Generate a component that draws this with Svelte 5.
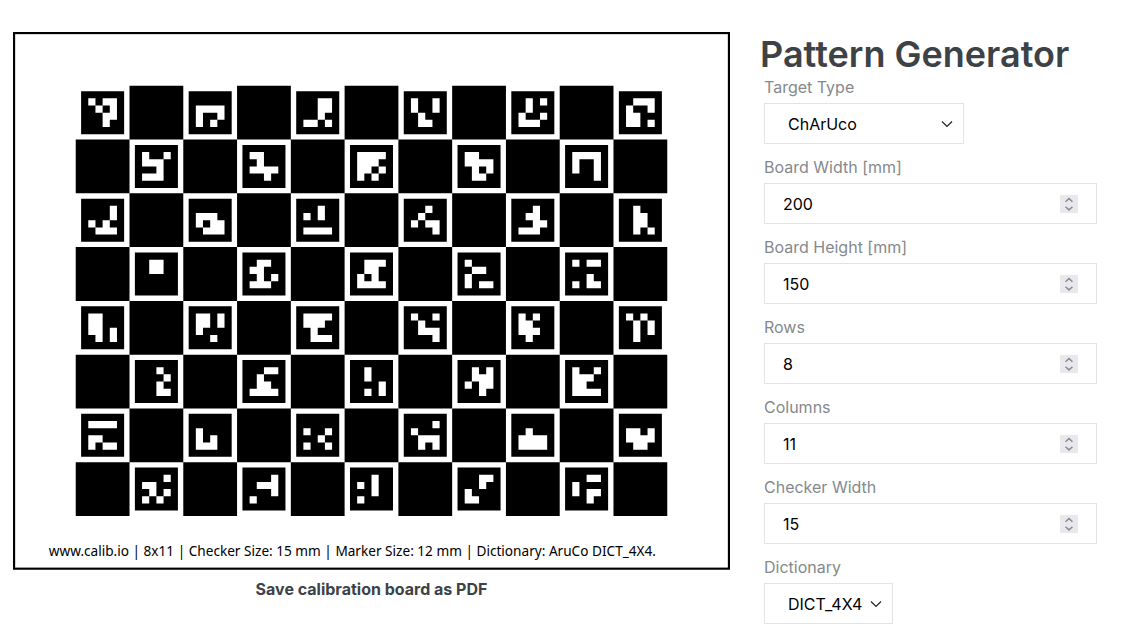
<script>
  let targetType = $state('ChArUco');
  let boardWidth = $state(200);
  let boardHeight = $state(150);
  let rows = $state(8);
  let columns = $state(11);
  let checker = $state(15);
  let dictionary = $state('DICT_4X4');

  // DICT_4X4 marker bits, two bytes per marker, most significant bit first
  const codes = [
    0xb532, 0x0f9a, 0x332d, 0x9946, 0x549e, 0x79cd,
    0x9e2e, 0xc4f2, 0xfeda, 0xcf56, 0xf991,
    0x11a7, 0x0eb7, 0x2a0f, 0x24b1, 0x263e, 0x4665,
    0x6600, 0x6c5e, 0x76af, 0x868b, 0xb02b,
    0xccd5, 0xdd82, 0xfe47, 0x9471, 0xace4, 0xa554,
    0x2123, 0x346f, 0x4415, 0x57b2, 0x9ecf,
    0xf0cb, 0x08ae, 0x0929, 0x1875, 0x04ff, 0x0df6,
    0x1c5a, 0x1718, 0x2a28, 0x328c, 0x38b2
  ];

  // Board geometry in tenths of a millimetre
  const board = $derived.by(() => {
    const size = checker * 10;
    const left = (boardWidth * 10 - columns * size) / 2;
    const top = (boardHeight * 10 - rows * size) / 2;
    let squares = '';
    let bits = '';
    let id = 0;
    const box = (x, y, s, w = s) => `M${x} ${y}h${w}v${s}h${-w}z`;
    for (let r = 0; r < rows; r++) {
      for (let c = 0; c < columns; c++) {
        const x = left + c * size;
        const y = top + r * size;
        if ((r + c) % 2) {
          squares += box(x, y, size);
          continue;
        }
        squares += box(x + size / 10, y + size / 10, (size * 4) / 5);
        const code = codes[id++ % codes.length];
        const bit = (size * 2) / 15;
        for (let j = 0; j < 4; j++) {
          for (let i = 0; i < 4; i++) {
            if (!((code >> (15 - j * 4 - i)) & 1)) continue;
            let run = 1;
            while (i + run < 4 && (code >> (15 - j * 4 - i - run)) & 1) run++;
            bits += box(x + size / 10 + bit * (i + 1), y + size / 10 + bit * (j + 1), bit, bit * run);
            i += run;
          }
        }
      }
    }
    return { squares, bits };
  });

  const caption = $derived(
    `www.calib.io | ${rows}x${columns} | Checker Size: ${checker} mm | Marker Size: ${(checker * 4) / 5} mm | Dictionary: AruCo ${dictionary}.`
  );
</script>

{#snippet chevron()}
  <svg class="chevron" viewBox="0 0 12 8" aria-hidden="true"><path d="M1 1.5 6 6.5 11 1.5" /></svg>
{/snippet}

{#snippet number(id, label, value, set)}
  <div class="field">
    <label for={id}>{label}</label>
    <div class="number">
      <input {id} type="number" min="1" {value} oninput={(e) => set(Math.max(1, +e.currentTarget.value))} />
      <span class="spinner">
        <button type="button" aria-label="Increase {label}" onclick={() => set(value + 1)}>
          <svg viewBox="0 0 18 9" aria-hidden="true"><path d="M5.5 6.8 9 3.6 12.5 6.8" /></svg>
        </button>
        <button type="button" aria-label="Decrease {label}" onclick={() => set(Math.max(1, value - 1))}>
          <svg viewBox="0 0 18 9" aria-hidden="true"><path d="M5.5 2.7 9 5.9 12.5 2.7" /></svg>
        </button>
      </span>
    </div>
  </div>
{/snippet}

<main>
  <section class="preview">
    <svg class="board" viewBox="0 0 {boardWidth * 10} {boardHeight * 10}" role="img" aria-label="Calibration board">
      <rect class="edge" x="3" y="3" width={boardWidth * 10 - 6} height={boardHeight * 10 - 6} />
      <path d={board.squares} />
      <path class="bits" d={board.bits} />
      <text x="100" y={boardHeight * 10 - 39}>{caption}</text>
    </svg>
    <a href="#save">Save calibration board as PDF</a>
  </section>

  <section class="settings">
    <h1>Pattern Generator</h1>
    <form>
      <div class="field">
        <label for="type">Target Type</label>
        <div class="select wide">
          <select id="type" bind:value={targetType}><option>ChArUco</option></select>
          {@render chevron()}
        </div>
      </div>
      {@render number('width', 'Board Width [mm]', boardWidth, (v) => (boardWidth = v))}
      {@render number('height', 'Board Height [mm]', boardHeight, (v) => (boardHeight = v))}
      {@render number('rows', 'Rows', rows, (v) => (rows = v))}
      {@render number('columns', 'Columns', columns, (v) => (columns = v))}
      {@render number('checker', 'Checker Width', checker, (v) => (checker = v))}
      <div class="field">
        <label for="dictionary">Dictionary</label>
        <div class="select">
          <select id="dictionary" bind:value={dictionary}><option>DICT_4X4</option></select>
          {@render chevron()}
        </div>
      </div>
    </form>
  </section>
</main>

<style>
  :global(body) {
    margin: 0;
    background: #fff;
  }
  main {
    display: grid;
    grid-template-columns: 717fr 337fr;
    column-gap: 30px;
    padding: 32px 39px 0 13px;
    font: 16px/20px Inter, 'Liberation Sans', sans-serif;
    color: #3d4246;
  }
  .preview {
    display: flex;
    flex-direction: column;
    align-items: center;
    gap: 9px;
  }
  .board {
    display: block;
    width: 100%;
  }
  .edge {
    fill: #fff;
    stroke: #000;
    stroke-width: 6;
  }
  .bits {
    fill: #fff;
  }
  .board text {
    font: 38px 'Noto Sans', sans-serif;
  }
  a {
    color: inherit;
    font-weight: 700;
    text-decoration: none;
  }
  h1 {
    margin: 0;
    font-size: 36px;
    line-height: 44px;
    font-weight: 600;
    white-space: nowrap;
  }
  form {
    display: grid;
    gap: 12px;
    padding-left: 4px;
  }
  .field {
    display: grid;
    gap: 5px;
    justify-items: start;
  }
  label {
    line-height: 22px;
    color: #85898d;
  }
  .number {
    display: flex;
    align-items: center;
    box-sizing: border-box;
    width: 100%;
    height: 41px;
    padding: 0 18px;
    border: 1px solid #e3e3e5;
  }
  input {
    flex: 1;
    min-width: 0;
    padding: 0;
    border: 0;
    outline: 0;
    background: none;
    font: inherit;
    color: #000;
    appearance: textfield;
  }
  input::-webkit-inner-spin-button {
    display: none;
  }
  .spinner {
    display: grid;
    width: 18px;
    height: 18px;
    background: #e9e9ed;
  }
  .spinner button {
    display: block;
    height: 9px;
    padding: 0;
    border: 0;
    background: none;
  }
  .spinner svg {
    display: block;
    width: 18px;
    height: 9px;
    fill: none;
    stroke: #8b8b93;
    stroke-width: 1.5;
  }
  .select {
    display: grid;
    align-items: center;
  }
  .wide {
    width: 200px;
  }
  select {
    grid-area: 1 / 1;
    height: 41px;
    padding: 0 29px 0 23px;
    border: 1px solid #e3e3e5;
    border-radius: 0;
    background: #fff;
    font: inherit;
    color: #000;
    appearance: none;
  }
  .chevron {
    grid-area: 1 / 1;
    justify-self: end;
    width: 12px;
    height: 8px;
    margin-right: 11px;
    fill: none;
    stroke: #222;
    stroke-width: 1.2;
    pointer-events: none;
  }
</style>
